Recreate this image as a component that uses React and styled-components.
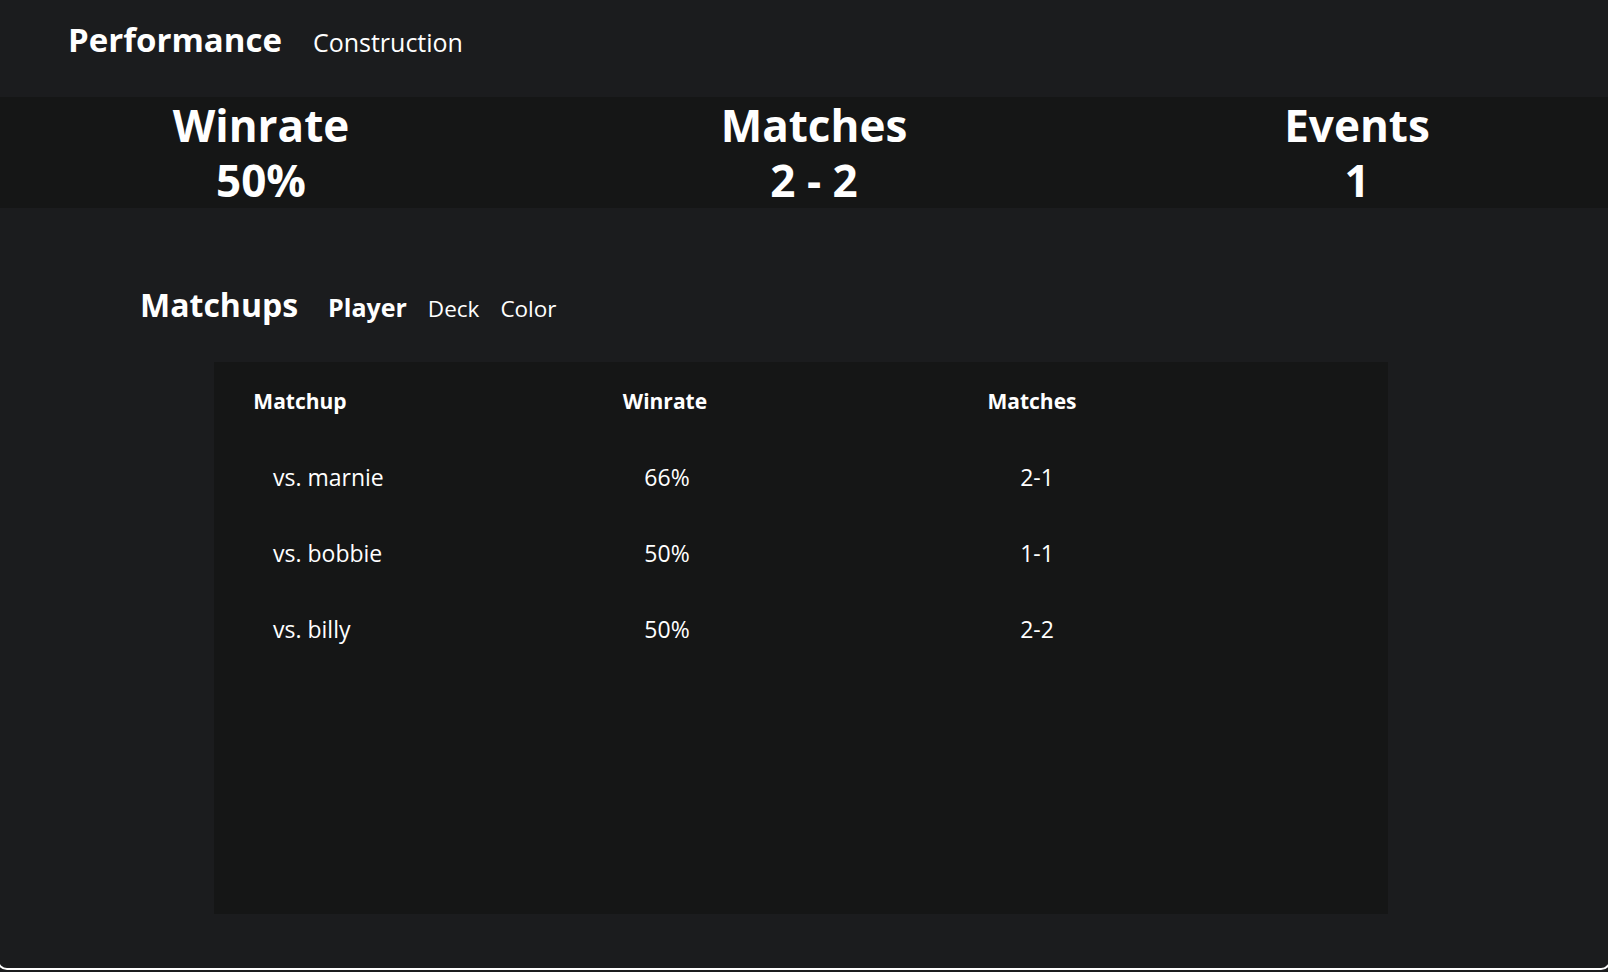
import React from 'react'
import styled, { createGlobalStyle } from 'styled-components'

const GlobalStyle = createGlobalStyle`
  html, body {
    margin: 0;
    padding: 0;
    background: #1b1c1e;
    color: #ffffff;
    font-family: "Open Sans", "Noto Sans", sans-serif;
  }
  #root {
    min-height: 972px;
    display: flex;
    flex-direction: column;
  }
`

const Header = styled.header`
  flex-shrink: 0;
  height: 97px;
  display: flex;
  align-items: baseline;
  gap: 31px;
  padding: 20px 0 0 68px;
  box-sizing: border-box;
`
const Title = styled.h1`
  margin: 0;
  font-size: 33px;
  font-weight: 700;
  line-height: 40px;
`
const SubTitle = styled.span`
  font-size: 25px;
  line-height: 40px;
`

const StatsBand = styled.section`
  flex-shrink: 0;
  background: #151616;
  height: 111px;
  display: grid;
  grid-template-columns: 522fr 584fr 502fr;
  justify-items: center;
  align-items: center;
`
const Stat = styled.div`
  display: flex;
  flex-direction: column;
  align-items: center;
  font-size: 44px;
  font-weight: 700;
  line-height: 55px;
`

const Section = styled.section`
  flex: 1;
  display: flex;
  flex-direction: column;
`
const SectionHead = styled.div`
  flex-shrink: 0;
  display: flex;
  align-items: baseline;
  padding: 77px 0 0 140px;
  height: 154px;
  box-sizing: border-box;
`
const SectionTitle = styled.h2`
  margin: 0 30px 0 0;
  font-size: 32px;
  font-weight: 700;
  line-height: 40px;
`
const Tab = styled.span`
  font-size: ${p => (p.$active ? '25px' : '22.5px')};
  font-weight: ${p => (p.$active ? 700 : 400)};
  margin-right: 21px;
  line-height: 40px;
  cursor: pointer;
`

const Panel = styled.div`
  flex-shrink: 0;
  margin-left: 214px;
  width: 1174px;
  height: 552px;
  background: #151616;
`
const Grid = styled.div`
  display: grid;
  grid-template-columns: 172px 558px 176px;
  grid-auto-rows: 76px;
`
const HeadCell = styled.div`
  font-size: 21px;
  font-weight: 700;
  text-align: center;
  line-height: 30px;
  padding-top: 24px;
`
const Cell = styled.div`
  font-size: 23px;
  line-height: 30px;
  text-align: ${p => (p.$left ? 'left' : 'center')};
  padding-left: ${p => (p.$left ? '59px' : p.$shift ? '10px' : '4px')};
  padding-top: 24px;
`

const Footer = styled.footer`
  flex-shrink: 0;
  margin: auto -3px 2px;
  height: 10px;
  border: 2px solid #ffffff;
  border-top: none;
  border-radius: 0 0 10px 10px;
`

const stats = [
  { label: 'Winrate', value: '50%' },
  { label: 'Matches', value: '2 - 2' },
  { label: 'Events', value: '1' },
]

const matchups = [
  { name: 'marnie', winrate: '66%', record: '2-1' },
  { name: 'bobbie', winrate: '50%', record: '1-1' },
  { name: 'billy', winrate: '50%', record: '2-2' },
]

export default function App() {
  return (
    <>
      <GlobalStyle />
      <Header>
        <Title>Performance</Title>
        <SubTitle>Construction</SubTitle>
      </Header>
      <StatsBand>
        {stats.map(s => (
          <Stat key={s.label}>
            <span>{s.label}</span>
            <span>{s.value}</span>
          </Stat>
        ))}
      </StatsBand>
      <Section>
        <SectionHead>
          <SectionTitle>Matchups</SectionTitle>
          <Tab $active>Player</Tab>
          <Tab>Deck</Tab>
          <Tab>Color</Tab>
        </SectionHead>
        <Panel>
          <Grid>
            <HeadCell>Matchup</HeadCell>
            <HeadCell>Winrate</HeadCell>
            <HeadCell>Matches</HeadCell>
            {matchups.map(m => (
              <React.Fragment key={m.name}>
                <Cell $left>vs. {m.name}</Cell>
                <Cell>{m.winrate}</Cell>
                <Cell $shift>{m.record}</Cell>
              </React.Fragment>
            ))}
          </Grid>
        </Panel>
        <Footer />
      </Section>
    </>
  )
}
